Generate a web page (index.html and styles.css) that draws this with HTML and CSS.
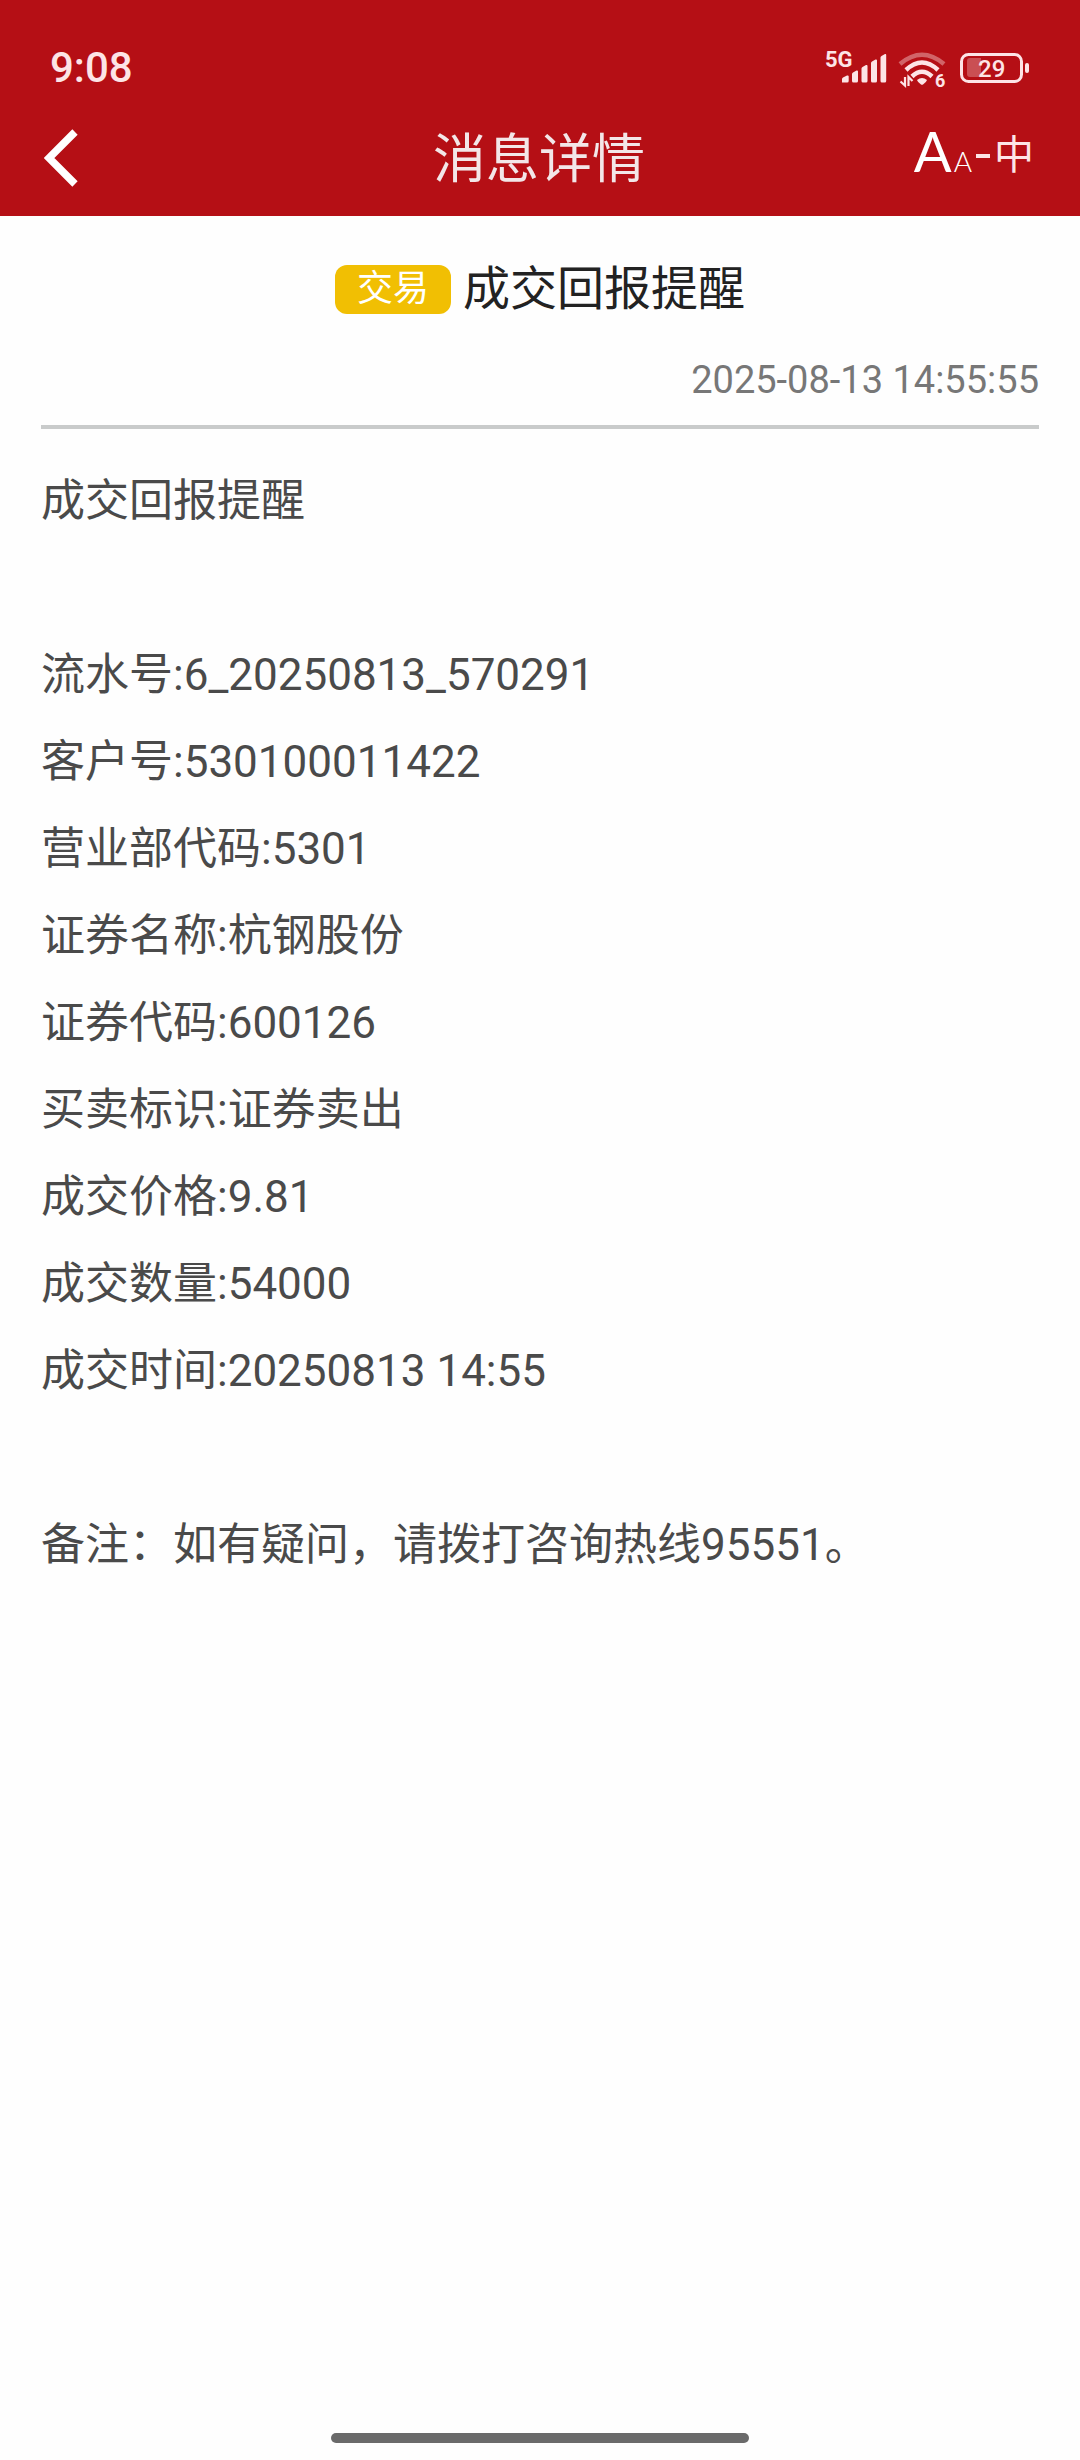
FILE: index.html
```html
<!DOCTYPE html>
<html lang="zh-CN">
<head>
<meta charset="utf-8">
<meta name="viewport" content="width=device-width, initial-scale=1">
<title>消息详情</title>
<link rel="stylesheet" href="styles.css">
</head>
<body>
<header class="top">
  <div class="status">
    <time class="clock">9:08</time>
    <svg class="status-icons" viewBox="824 46 208 44" width="208" height="44" role="img" aria-label="5G, Wi-Fi 6, 29%">
      <text class="net" x="825" y="67">5G</text>
      <g fill="#fde4e6">
        <path d="M842 82.500V79q0-1 1-1.500l4-2q1.700-.5 1.700 1V81q0 1.500-1.500 1.500z"/>
        <path d="M852 74q0-1 1-1.500l3.500-2q1.500-.5 1.500 1V81q0 1.500-1.500 1.500h-3q-1.500 0-1.500-1.500z"/>
        <path d="M861.500 68.500q0-1 1-1.500l3.500-2q1.500-.5 1.500 1V81q0 1.500-1.500 1.500h-3q-1.500 0-1.500-1.500z"/>
        <path d="M871 63q0-1 1-1.500l3.500-2q1.500-.5 1.500 1V81q0 1.500-1.500 1.500h-3q-1.500 0-1.500-1.500z"/>
        <path d="M880.500 57.500q0-1 1-1.500l3.500-2q1.200-.5 1.200 1V81q0 1.500-1.500 1.500h-2.700q-1.500 0-1.500-1.500z"/>
        <path d="M917 80Q922 76 927 80Q926.500 82 923 84.500Q922 85 921 84.500Q917.500 82 917 80z"/>
      </g>
      <g fill="none" stroke="#fde4e6" stroke-width="4.500">
        <path d="M900 64Q922 45.500 944 64" stroke-opacity=".4"/>
        <path d="M906 70Q922 55 938 70"/>
        <path d="M912 76.500Q922 67 932 76.500"/>
      </g>
      <path d="M905 77V85.500L900.500 81.500M908.500 86V77L912.500 81" fill="none" stroke="#fde4e6" stroke-width="2.200"/>
      <text class="gen" x="935" y="87">6</text>
      <rect x="961.500" y="54.500" width="60" height="27" rx="7" fill="none" stroke="#fde4e6" stroke-width="3"/>
      <path d="M981 58h-11q-3 0-3 3v13q0 3 3 3h11z" fill="#fde4e6" fill-opacity=".3"/>
      <rect x="1025" y="63" width="4" height="10" rx="2" fill="#fde4e6"/>
      <text class="charge" x="978" y="77">29</text>
    </svg>
  </div>
  <nav class="bar">
    <button class="back" type="button" aria-label="返回">
      <svg viewBox="0 0 36 60" width="36" height="60"><path d="M31 4L5 30 31 56" fill="none" stroke="#fff" stroke-width="7.500"/></svg>
    </button>
    <h1 class="bar-title">消息详情</h1>
    <button class="size" type="button"><span class="size-large">A</span><span class="size-small">A</span><span class="size-dash"></span><span class="size-now">中</span></button>
  </nav>
</header>
<main class="message">
  <div class="heading">
    <span class="tag">交易</span>
    <h2 class="subject">成交回报提醒</h2>
  </div>
  <time class="sent">2025-08-13 14:55:55</time>
  <article class="body">
    <p>成交回报提醒</p>
    <p class="section">流水号:6_20250813_570291</p>
    <p>客户号:530100011422</p>
    <p>营业部代码:5301</p>
    <p>证券名称:杭钢股份</p>
    <p>证券代码:600126</p>
    <p>买卖标识:证券卖出</p>
    <p>成交价格:9.81</p>
    <p>成交数量:54000</p>
    <p>成交时间:20250813 14:55</p>
    <p class="section">备注：如有疑问，请拨打咨询热线95551。</p>
  </article>
</main>
<footer class="gesture"><div class="handle"></div></footer>
</body>
</html>
```
FILE: styles.css
```css
* {
  box-sizing: border-box;
}

body {
  margin: 0;
  min-height: 100vh;
  display: flex;
  flex-direction: column;
  background: #fefefe;
  color: #4a4a4a;
  font-family: Roboto, "Noto Sans CJK SC", sans-serif;
}

h1, h2, p {
  margin: 0;
  font-weight: 400;
}

button {
  padding: 0;
  border: 0;
  background: none;
  color: inherit;
  font: inherit;
}

svg {
  display: block;
}

/* Status bar and navigation */
.top {
  background: #b50f15;
  color: #fff;
}

.status {
  height: 100px;
  padding: 36px 48px 0 50px;
  display: flex;
  justify-content: space-between;
  align-items: center;
}

.clock {
  color: #fde4e6;
  font-size: 42px;
  font-weight: 500;
  line-height: 64px;
}

.status-icons text {
  fill: #fde4e6;
  font-weight: 700;
}

.status-icons .net {
  font-size: 22px;
}

.status-icons .gen {
  font-size: 18px;
}

.status-icons .charge {
  font-size: 24px;
  font-weight: 500;
}

.bar {
  height: 116px;
  padding: 0 46px 0 44px;
  display: grid;
  grid-template-columns: 1fr auto 1fr;
  align-items: center;
}

.back {
  justify-self: start;
}

.bar-title {
  padding-top: 4px;
  color: #f3e6e8;
  font-size: 53px;
  line-height: 80px;
}

.size {
  justify-self: end;
  padding-bottom: 4px;
  display: flex;
  align-items: baseline;
  gap: 2px;
  line-height: 64px;
}

.size-large,
.size-small {
  font-family: Lato, sans-serif;
  font-size: 56px;
  font-weight: 400;
}

.size-small {
  font-size: 28px;
  font-weight: 300;
}

.size-dash {
  width: 14px;
  height: 4px;
  margin: 0 2px;
  align-self: center;
  background: #fde4e6;
}

.size-now {
  align-self: center;
  color: #fde4e6;
  font-size: 40px;
}

/* Message */
.message {
  flex: 1;
  padding: 40px 41px 0;
}

.heading {
  display: flex;
  justify-content: center;
  align-items: center;
  gap: 12px;
}

.tag {
  padding: 0 22px;
  border-radius: 12px;
  background: #f1bf03;
  color: #fff;
  font-size: 36px;
  line-height: 49px;
}

.subject {
  color: #222;
  font-size: 47px;
  line-height: 66px;
}

.sent {
  display: block;
  padding: 28px 0 15px;
  border-bottom: 4px solid #c9cbcb;
  color: #777;
  font-size: 38px;
  line-height: 60px;
  text-align: right;
}

.body {
  padding: 29px 0;
  font-size: 44px;
  line-height: 87px;
}

.section {
  margin-top: 87px;
}

/* System gesture area */
.gesture {
  padding-bottom: 17px;
}

.handle {
  width: 39%;
  max-width: 418px;
  height: 10px;
  margin: 0 auto;
  border-radius: 5px;
  background: #6a6a6a;
}
```
